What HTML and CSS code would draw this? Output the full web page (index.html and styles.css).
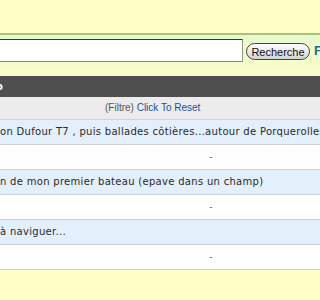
FILE: index.html
```html
<!DOCTYPE html>
<html lang="fr">
<head>
    <meta charset="UTF-8">
    <title>Recherche</title>
    <link rel="stylesheet" href="styles.css">
</head>
<body>
    <div class="top"></div>

    <form class="search">
        <input class="q" type="text" value="">
        <button class="go" type="button">Recherche</button>
        <a class="more" href="#">F</a>
    </form>

    <div class="bar"><span class="bar-label">o</span></div>

    <div class="list">
        <div class="filter">(Filtre) <a href="#">Click To Reset</a></div>
        <div class="row odd">on Dufour T7 , puis ballades côtières...autour de Porquerolles...</div>
        <div class="row even"><span class="dash">-</span></div>
        <div class="row odd">n de mon premier bateau (epave dans un champ)</div>
        <div class="row even"><span class="dash">-</span></div>
        <div class="row odd">à naviguer...</div>
        <div class="row even"><span class="dash">-</span></div>
    </div>
</body>
</html>
```

FILE: styles.css
```css
html, body{
    margin:0;
    padding:0;
    background-color:#fefec6;
    overflow:hidden;
}

.top{
    height:33px;
}

.search{
    margin:0;
    height:37px;
    padding-top:4px;
    border-top:2px solid #a6c27c;
    background:linear-gradient(#e6fbcd, #fbfdc8);
    display:flex;
    align-items:flex-start;
    white-space:nowrap;
}

.q{
    box-sizing:border-box;
    width:253px;
    height:23px;
    margin:0 0 0 -10px;
    border:1px solid;
    border-color:#2d3a26 #8a9a78 #7d8c6c #8a9a78;
    background:#fff;
    flex:none;
}

.go{
    box-sizing:border-box;
    height:17px;
    width:64px;
    margin:4px 0 0 3px;
    padding:0;
    border:1px solid #444;
    border-radius:9px;
    background:linear-gradient(#ffffff, #d4d4d4);
    font-family:"Liberation Sans", Arial, sans-serif;
    font-size:11px;
    color:#111;
    flex:none;
}

.more{
    margin:4px 0 0 4px;
    font-family:"Liberation Sans", Arial, sans-serif;
    font-weight:bold;
    font-size:13px;
    color:#1d6d8e;
    text-decoration:none;
}

.bar{
    height:21px;
    background-color:#4f4f4f;
    display:flex;
    align-items:center;
}

.bar-label{
    margin-left:-4px;
    color:#fff;
    font-family:"DejaVu Sans", Verdana, sans-serif;
    font-weight:bold;
    font-size:10px;
}

.list{
    font-family:"DejaVu Sans", Verdana, sans-serif;
    font-size:10px;
    color:#2a2a2a;
}

.filter{
    height:22px;
    line-height:22px;
    padding-left:105px;
    background-color:#ececec;
    border-bottom:1px solid #d2d2d2;
    font-family:"Liberation Sans", Arial, sans-serif;
    color:#555;
}

.filter a{
    color:#1550a8;
    text-decoration:none;
}

.row{
    height:24px;
    line-height:24px;
    border-bottom:1px solid #cdd1d6;
    white-space:nowrap;
    overflow:hidden;
    letter-spacing:.3px;
}

.odd{
    background-color:#e4effc;
}

.even{
    background-color:#fefefe;
}

.dash{
    padding-left:209px;
    color:#777;
}
```
